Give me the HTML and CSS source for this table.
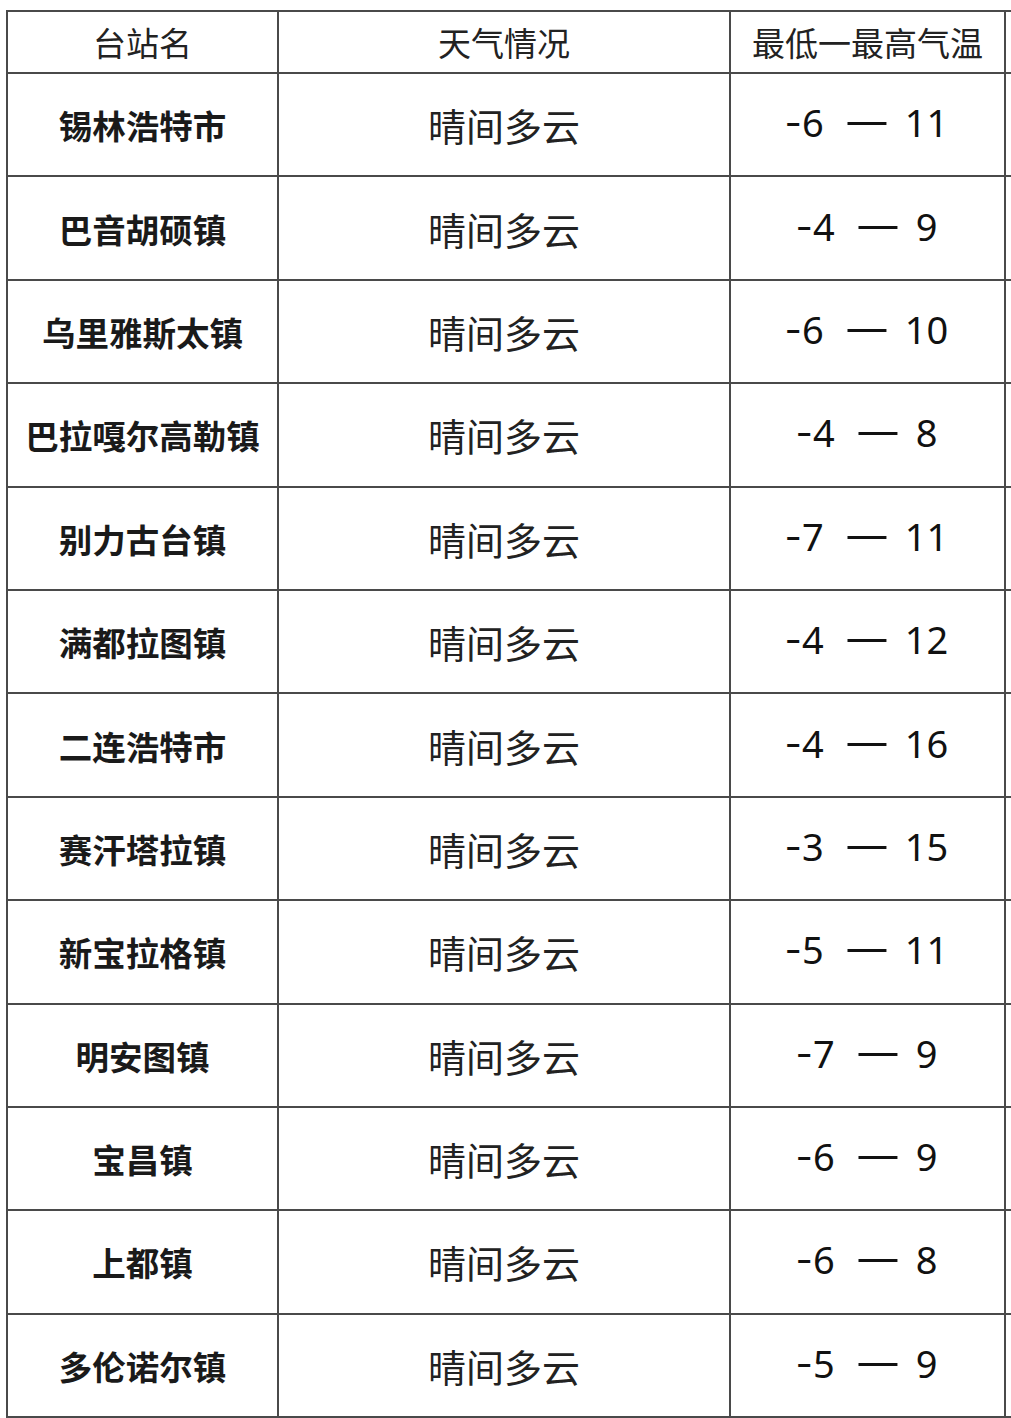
FILE: index.html
```html
<!DOCTYPE html>
<html lang="zh-CN">
<head>
<meta charset="utf-8">
<title>天气预报</title>
<link rel="stylesheet" href="styles.css">
</head>
<body>
<div class="page">
<table class="weather">
  <colgroup>
    <col class="c-name">
    <col class="c-wx">
    <col class="c-temp">
    <col class="c-extra">
  </colgroup>
  <thead>
    <tr class="head">
      <th>台站名</th>
      <th>天气情况</th>
      <th>最低一最高气温</th>
      <th class="extra"></th>
    </tr>
  </thead>
  <tbody>
    <tr><td class="name">锡林浩特市</td><td class="wx">晴间多云</td><td class="temp"><span class="minus">-</span>6<span class="dash">—</span>11</td><td class="extra"></td></tr>
    <tr><td class="name">巴音胡硕镇</td><td class="wx">晴间多云</td><td class="temp"><span class="minus">-</span>4<span class="dash">—</span>9</td><td class="extra"></td></tr>
    <tr><td class="name">乌里雅斯太镇</td><td class="wx">晴间多云</td><td class="temp"><span class="minus">-</span>6<span class="dash">—</span>10</td><td class="extra"></td></tr>
    <tr><td class="name">巴拉嘎尔高勒镇</td><td class="wx">晴间多云</td><td class="temp"><span class="minus">-</span>4<span class="dash">—</span>8</td><td class="extra"></td></tr>
    <tr><td class="name">别力古台镇</td><td class="wx">晴间多云</td><td class="temp"><span class="minus">-</span>7<span class="dash">—</span>11</td><td class="extra"></td></tr>
    <tr><td class="name">满都拉图镇</td><td class="wx">晴间多云</td><td class="temp"><span class="minus">-</span>4<span class="dash">—</span>12</td><td class="extra"></td></tr>
    <tr><td class="name">二连浩特市</td><td class="wx">晴间多云</td><td class="temp"><span class="minus">-</span>4<span class="dash">—</span>16</td><td class="extra"></td></tr>
    <tr><td class="name">赛汗塔拉镇</td><td class="wx">晴间多云</td><td class="temp"><span class="minus">-</span>3<span class="dash">—</span>15</td><td class="extra"></td></tr>
    <tr><td class="name">新宝拉格镇</td><td class="wx">晴间多云</td><td class="temp"><span class="minus">-</span>5<span class="dash">—</span>11</td><td class="extra"></td></tr>
    <tr><td class="name">明安图镇</td><td class="wx">晴间多云</td><td class="temp"><span class="minus">-</span>7<span class="dash">—</span>9</td><td class="extra"></td></tr>
    <tr><td class="name">宝昌镇</td><td class="wx">晴间多云</td><td class="temp"><span class="minus">-</span>6<span class="dash">—</span>9</td><td class="extra"></td></tr>
    <tr><td class="name">上都镇</td><td class="wx">晴间多云</td><td class="temp"><span class="minus">-</span>6<span class="dash">—</span>8</td><td class="extra"></td></tr>
    <tr><td class="name">多伦诺尔镇</td><td class="wx">晴间多云</td><td class="temp"><span class="minus">-</span>5<span class="dash">—</span>9</td><td class="extra"></td></tr>
  </tbody>
</table>
</div>
</body>
</html>
```
FILE: styles.css
```css
html, body {
  margin: 0;
  padding: 0;
  background: #fff;
  overflow: hidden;
}
.page {
  padding: 10px 0 0 6px;
}
.weather {
  border-collapse: collapse;
  table-layout: fixed;
  width: 1005px;
  font-family: "Noto Sans CJK SC", "Noto Sans", sans-serif;
  color: #1a1a1a;
}
.c-name { width: 271px; }
.c-wx { width: 452px; }
.c-temp { width: 275px; }
.c-extra { width: 7px; }
.weather th, .weather td {
  border: 2px solid #4a4a4a;
  padding: 0;
  text-align: center;
  vertical-align: middle;
  white-space: nowrap;
}
.weather .extra {
  border-right: none;
}
.head {
  height: 62px;
}
.head th {
  font-weight: 400;
  font-size: 33px;
  line-height: 1;
  color: #222;
}
.weather tbody tr {
  height: 103.4px;
}
.name {
  font-weight: 700;
  font-size: 33.5px;
}
.wx {
  font-weight: 400;
  font-size: 38px;
  color: #222;
}
.weather .temp {
  font-family: "Noto Sans", sans-serif;
  font-size: 38px;
  line-height: 1;
  color: #111;
  padding-bottom: 6px;
}
.minus {
  display: inline-block;
  transform: translateY(-2px) scaleX(1.3);
  margin-right: 3px;
}
.dash {
  display: inline-block;
  width: 38px;
  margin: 0 19px 0 24px;
  font-family: "Noto Sans CJK SC", sans-serif;
  text-align: center;
  transform: translateY(-5px) scaleX(1.28) scaleY(1.3);
}
```
